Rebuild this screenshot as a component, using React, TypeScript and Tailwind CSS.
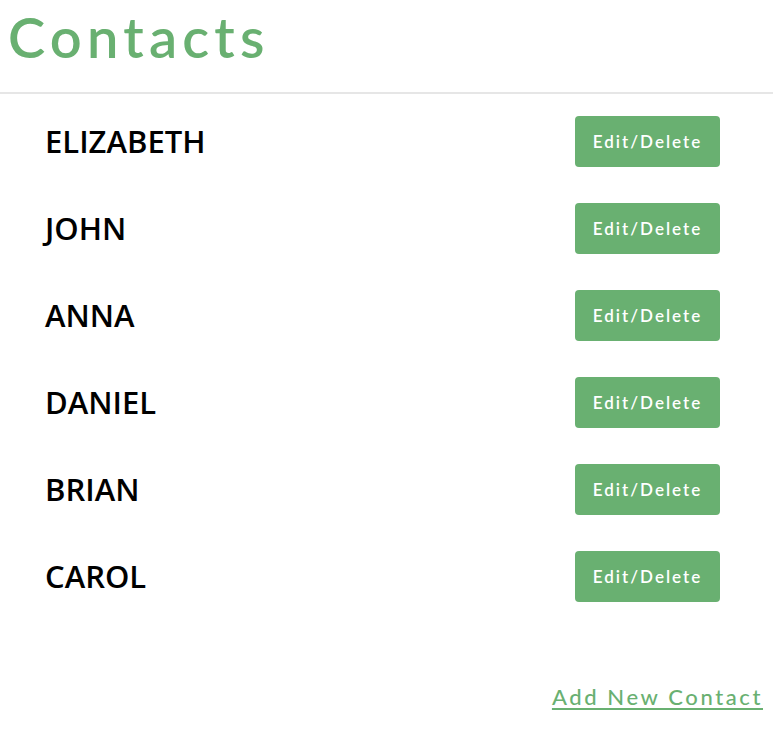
const contacts = ['ELIZABETH', 'JOHN', 'ANNA', 'DANIEL', 'BRIAN', 'CAROL'];

export default function App() {
  return (
    <div className="w-[773px] h-[750px] bg-white">
      <header className="h-[94px] border-b-2 border-[#e6e6e6] pl-[8px] pt-[1px]">
        <h1
          className="text-[56px] leading-[72px] tracking-[5.2px] text-[#69b071] font-semibold"
          style={{ fontFamily: '"Lato", "Open Sans", sans-serif' }}
        >
          Contacts
        </h1>
      </header>

      <ul className="pt-[4px] pl-[45px] pr-[53px]">
        {contacts.map(name => (
          <li key={name} className="flex items-center justify-between py-[18px]">
            <span
              className="text-[31px] leading-[40px] font-semibold text-black -mt-[2px]"
              style={{ fontFamily: '"Open Sans", sans-serif' }}
            >
              {name}
            </span>
            <button
              className="w-[145px] h-[51px] rounded-[4px] bg-[#69b071] text-white text-[17px] tracking-[2px] font-semibold"
              style={{ fontFamily: '"Lato", sans-serif' }}
            >
              Edit/Delete
            </button>
          </li>
        ))}
      </ul>

      <div className="flex justify-end pr-[10px] pt-[60px]">
        <a
          href="#"
          className="text-[22px] tracking-[2.6px] text-[#69b071] font-medium underline underline-offset-[3px] decoration-2"
          style={{ fontFamily: '"Lato", sans-serif' }}
        >
          Add New Contact
        </a>
      </div>
    </div>
  );
}
